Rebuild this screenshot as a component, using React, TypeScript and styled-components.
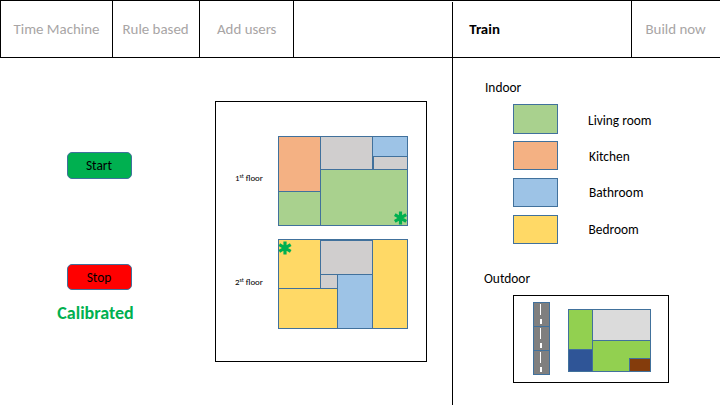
import React from "react";
import styled, { createGlobalStyle } from "styled-components";

const GlobalStyle = createGlobalStyle`
  * { box-sizing: border-box; }
  body {
    margin: 0;
    background: #fff;
    color: #000;
    font-family: Carlito, Calibri, Lato, sans-serif;
    font-size: 13.4px;
  }
`;

const palette = {
  outline: "#41719c",
  living: "#a9d18e",
  kitchen: "#f4b183",
  bathroom: "#9dc3e6",
  bedroom: "#ffd966",
  hall: "#d0cece",
  marker: "#00b050",
};

const Page = styled.div`
  width: 720px;
  height: 405px;
  overflow: hidden;
  display: grid;
  grid-template-columns: 452px 268px;
`;

const Side = styled.div`
  display: flex;
  flex-direction: column;
`;

const TabBar = styled.nav`
  flex: none;
  display: flex;
  height: 58px;
  border-top: 1px solid #000;
  border-bottom: 1px solid #000;
`;

const Tab = styled.div<{ $width?: number; $inset: number; $active?: boolean; $edge?: boolean }>`
  ${(p) => (p.$width ? `width: ${p.$width}px;` : "flex: 1;")}
  padding: 0 0 1px ${(p) => p.$inset}px;
  display: flex;
  align-items: center;
  white-space: nowrap;
  border-left: ${(p) => (p.$edge === false ? "none" : "1px solid #000")};
  font-size: 14.9px;
  font-weight: ${(p) => (p.$active ? 700 : 400)};
  color: ${(p) => (p.$active ? "#000" : "#a8a5a5")};
`;

const Workspace = styled.main`
  flex: 1;
  display: grid;
  grid-template-columns: 215px 212px;
`;

const Controls = styled.section`
  display: flex;
  flex-direction: column;
  align-items: center;
  padding: 94px 17px 0 0;
`;

const ControlButton = styled.button<{ $color: string }>`
  width: 65px;
  height: 27px;
  padding: 0;
  border: 1px solid ${palette.outline};
  border-radius: 5px;
  background: ${(p) => p.$color};
  color: #000;
  font: inherit;
  line-height: 25px;

  & + & {
    margin-top: 85px;
    height: 26px;
    line-height: 26px;
  }
`;

const Status = styled.div`
  margin: 12px 7px 0 0;
  font-size: 18px;
  line-height: 22px;
  font-weight: 700;
  color: ${palette.marker};
`;

const FloorPanel = styled.section`
  height: 261px;
  margin-top: 43px;
  padding: 34px 0 0 19px;
  border: 1px solid #000;
  display: flex;
  flex-direction: column;
  gap: 13px;
`;

const Floor = styled.div`
  display: grid;
  grid-template-columns: 43px 130px;
  align-items: center;
  height: 90px;
`;

const FloorLabel = styled.div<{ $lift: number }>`
  font-size: 8.9px;
  line-height: 10px;
  white-space: nowrap;
  padding-bottom: ${(p) => p.$lift}px;

  sup {
    font-size: 5.9px;
    line-height: 0;
    vertical-align: 2.6px;
  }
`;

const Drawing = styled.svg`
  display: block;
`;

const TrainSide = styled(Side)`
  position: relative;

  &::before {
    content: "";
    position: absolute;
    left: 0;
    top: 2px;
    width: 1px;
    height: 403px;
    background: #000;
  }
`;

const Legend = styled.section`
  padding: 22px 0 0 33px;
`;

const Heading = styled.h2<{ $nudge?: boolean }>`
  margin: 0 0 0 ${(p) => (p.$nudge ? -1 : 0)}px;
  font-size: 13.4px;
  font-weight: 400;
  line-height: 16px;
`;

const RoomKey = styled.div`
  display: grid;
  grid-template-columns: 75px auto;
  height: 140px;
  margin: 8px 0 27px 28px;
`;

const SwatchColumn = styled.div`
  display: flex;
  flex-direction: column;
  gap: 8px;
`;

const Swatch = styled.span<{ $color: string }>`
  width: 45px;
  height: 29px;
  border: 1px solid ${palette.outline};
  background: ${(p) => p.$color};

  &:first-child {
    height: 30px;
    margin-bottom: -1px;
  }
`;

const NameColumn = styled.div`
  display: grid;
  grid-template-rows: 36px 36px 37px 16px;
  padding-top: 9px;
  line-height: 16px;
`;

const RoomName = styled.span<{ $indent: number }>`
  padding-left: ${(p) => p.$indent}px;
`;

const OutdoorPanel = styled.div`
  width: 156px;
  height: 88px;
  margin: 8px 0 0 28px;
  border: 1px solid #000;
`;

type Area = [x: number, y: number, w: number, h: number, fill: string];

const firstFloor: Area[] = [
  [0, 0, 42, 55, palette.kitchen],
  [0, 55, 42, 34, palette.living],
  [42, 0, 52, 33, palette.hall],
  [94, 0, 35, 20, palette.bathroom],
  [95, 20, 34, 13, palette.hall],
  [42, 33, 87, 56, palette.living],
];

const secondFloor: Area[] = [
  [0, 0, 129, 89, palette.bedroom],
  [0, 49, 59, 40, palette.bedroom],
  [42, 35, 17, 14, palette.hall],
  [42, 1, 52, 34, palette.hall],
  [59, 35, 35, 54, palette.bathroom],
  [94, 0, 35, 89, palette.bedroom],
];

const garden: Area[] = [
  [54, 13, 24, 40, "#92d050"],
  [54, 53, 24, 22, "#2f5597"],
  [78, 44, 58, 31, "#92d050"],
  [78, 13, 58, 31, "#dbdbdb"],
  [115, 62, 21, 13, "#843c0c"],
];

const Areas = ({ items }: { items: Area[] }) => (
  <g stroke={palette.outline}>
    {items.map(([x, y, w, h, fill], i) => (
      <rect key={i} x={x + 0.5} y={y + 0.5} width={w} height={h} fill={fill} />
    ))}
  </g>
);

const Marker = ({ x, y }: { x: number; y: number }) => (
  <g transform={`translate(${x} ${y})`} stroke={palette.marker} strokeWidth="3.2">
    <path d="M0-6.6V6.6M-5.7-3.3L5.7 3.3M-5.7 3.3L5.7-3.3" />
  </g>
);

const FloorPlan = ({ items, marker }: { items: Area[]; marker: [number, number] }) => (
  <Drawing width="130" height="90" viewBox="0 0 130 90">
    <Areas items={items} />
    <Marker x={marker[0]} y={marker[1]} />
  </Drawing>
);

const OutdoorPlan = () => (
  <Drawing width="154" height="86" viewBox="0 0 154 86">
    {[6, 30, 54].map((y) => (
      <g key={y}>
        <rect x="19.5" y={y + 0.5} width="16" height="24" fill="#7f7f7f" stroke={palette.outline} />
        <path fill="#fff" d={`M26 ${y + 2}h1v11h-1zM26 ${y + 17}h2v5h-2z`} />
      </g>
    ))}
    <Areas items={garden} />
  </Drawing>
);

const rooms = [
  { name: "Living room", color: palette.living, indent: 0 },
  { name: "Kitchen", color: palette.kitchen, indent: 1 },
  { name: "Bathroom", color: palette.bathroom, indent: 1 },
  { name: "Bedroom", color: palette.bedroom, indent: 0.5 },
];

export default function App() {
  return (
    <>
      <GlobalStyle />
      <Page>
        <Side>
          <TabBar>
            <Tab $width={112} $inset={12.5}>Time Machine</Tab>
            <Tab $width={87} $inset={9.5}>Rule based</Tab>
            <Tab $width={94} $inset={17}>Add users</Tab>
            <Tab $inset={0} />
          </TabBar>
          <Workspace>
            <Controls>
              <ControlButton $color="#00b050">Start</ControlButton>
              <ControlButton $color="#ff0000">Stop</ControlButton>
              <Status>Calibrated</Status>
            </Controls>
            <FloorPanel>
              <Floor>
                <FloorLabel $lift={6}>1<sup>st</sup> floor</FloorLabel>
                <FloorPlan items={firstFloor} marker={[122.5, 82]} />
              </Floor>
              <Floor>
                <FloorLabel $lift={4}>2<sup>st</sup> floor</FloorLabel>
                <FloorPlan items={secondFloor} marker={[7, 9]} />
              </Floor>
            </FloorPanel>
          </Workspace>
        </Side>
        <TrainSide>
          <TabBar>
            <Tab $width={179} $inset={17.3} $active $edge={false}>Train</Tab>
            <Tab $inset={13.5}>Build now</Tab>
          </TabBar>
          <Legend>
            <Heading>Indoor</Heading>
            <RoomKey>
              <SwatchColumn>
                {rooms.map((room) => (
                  <Swatch key={room.name} $color={room.color} />
                ))}
              </SwatchColumn>
              <NameColumn>
                {rooms.map((room) => (
                  <RoomName key={room.name} $indent={room.indent}>{room.name}</RoomName>
                ))}
              </NameColumn>
            </RoomKey>
            <Heading $nudge>Outdoor</Heading>
            <OutdoorPanel>
              <OutdoorPlan />
            </OutdoorPanel>
          </Legend>
        </TrainSide>
      </Page>
    </>
  );
}
